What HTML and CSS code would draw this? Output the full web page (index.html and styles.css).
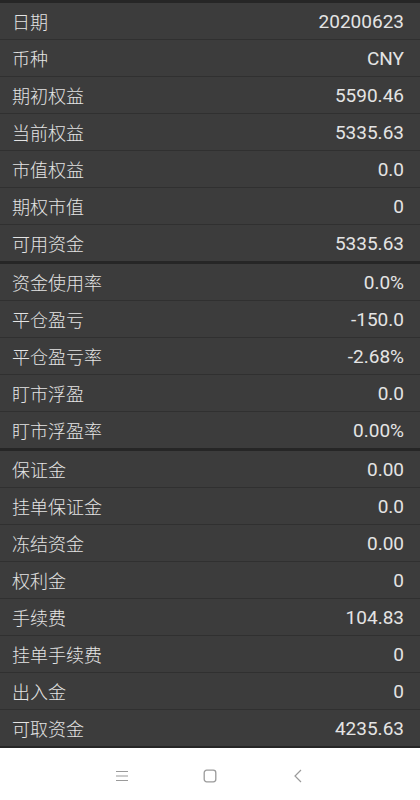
FILE: index.html
```html
<!DOCTYPE html>
<html lang="zh">
<head>
<meta charset="utf-8">
<link rel="stylesheet" href="styles.css">
</head>
<body>
<div class="screen">
  <div class="list">
    <section class="group">
      <div class="row"><span class="label">日期</span><span class="value">20200623</span></div>
      <div class="row"><span class="label">币种</span><span class="value">CNY</span></div>
      <div class="row"><span class="label">期初权益</span><span class="value">5590.46</span></div>
      <div class="row"><span class="label">当前权益</span><span class="value">5335.63</span></div>
      <div class="row"><span class="label">市值权益</span><span class="value">0.0</span></div>
      <div class="row"><span class="label">期权市值</span><span class="value">0</span></div>
      <div class="row"><span class="label">可用资金</span><span class="value">5335.63</span></div>
    </section>
    <section class="group">
      <div class="row"><span class="label">资金使用率</span><span class="value">0.0%</span></div>
      <div class="row"><span class="label">平仓盈亏</span><span class="value">-150.0</span></div>
      <div class="row"><span class="label">平仓盈亏率</span><span class="value">-2.68%</span></div>
      <div class="row"><span class="label">盯市浮盈</span><span class="value">0.0</span></div>
      <div class="row"><span class="label">盯市浮盈率</span><span class="value">0.00%</span></div>
    </section>
    <section class="group">
      <div class="row"><span class="label">保证金</span><span class="value">0.00</span></div>
      <div class="row"><span class="label">挂单保证金</span><span class="value">0.0</span></div>
      <div class="row"><span class="label">冻结资金</span><span class="value">0.00</span></div>
      <div class="row"><span class="label">权利金</span><span class="value">0</span></div>
      <div class="row"><span class="label">手续费</span><span class="value">104.83</span></div>
      <div class="row"><span class="label">挂单手续费</span><span class="value">0</span></div>
      <div class="row"><span class="label">出入金</span><span class="value">0</span></div>
      <div class="row"><span class="label">可取资金</span><span class="value">4235.63</span></div>
    </section>
  </div>
  <nav class="navbar">
    <svg class="nav-icon" width="14" height="14" viewBox="0 0 14 14"><path d="M1 2.5H13M1 7H13M1 11.5H13" stroke="#9a9a9a" stroke-width="1.2" fill="none"/></svg>
    <svg class="nav-icon" width="14" height="14" viewBox="0 0 14 14"><rect x="1.2" y="1.2" width="11.6" height="11.6" rx="2.5" stroke="#9a9a9a" stroke-width="1.3" fill="none"/></svg>
    <svg class="nav-icon" width="14" height="14" viewBox="0 0 14 14"><path d="M10 1L4 7L10 13" stroke="#9a9a9a" stroke-width="1.2" fill="none"/></svg>
  </nav>
</div>
</body>
</html>
```
FILE: styles.css
```css
* { box-sizing: border-box; }
html, body { margin: 0; padding: 0; }
body {
  width: 420px;
  height: 800px;
  overflow: hidden;
  background: #ffffff;
  font-family: "Roboto", "Noto Sans CJK SC", sans-serif;
}
.screen {
  display: flex;
  flex-direction: column;
  height: 800px;
}
.list {
  background: #262626;
  padding-top: 3px;
  padding-bottom: 2px;
  display: flex;
  flex-direction: column;
  gap: 3px;
}
.group {
  display: flex;
  flex-direction: column;
  gap: 1px;
  background: #303030;
}
.row {
  height: 36px;
  background: #3c3c3c;
  display: flex;
  align-items: center;
  justify-content: space-between;
  padding: 0 16px 0 12px;
  color: #e4e4e4;
}
.label {
  font-size: 18px;
  font-weight: 300;
}
.value {
  font-size: 19px;
  font-weight: 400;
}
.navbar {
  flex: 1;
  background: #ffffff;
  display: flex;
  align-items: center;
  justify-content: center;
  gap: 74px;
  padding-top: 3px;
}
.nav-icon { display: block; }
```
